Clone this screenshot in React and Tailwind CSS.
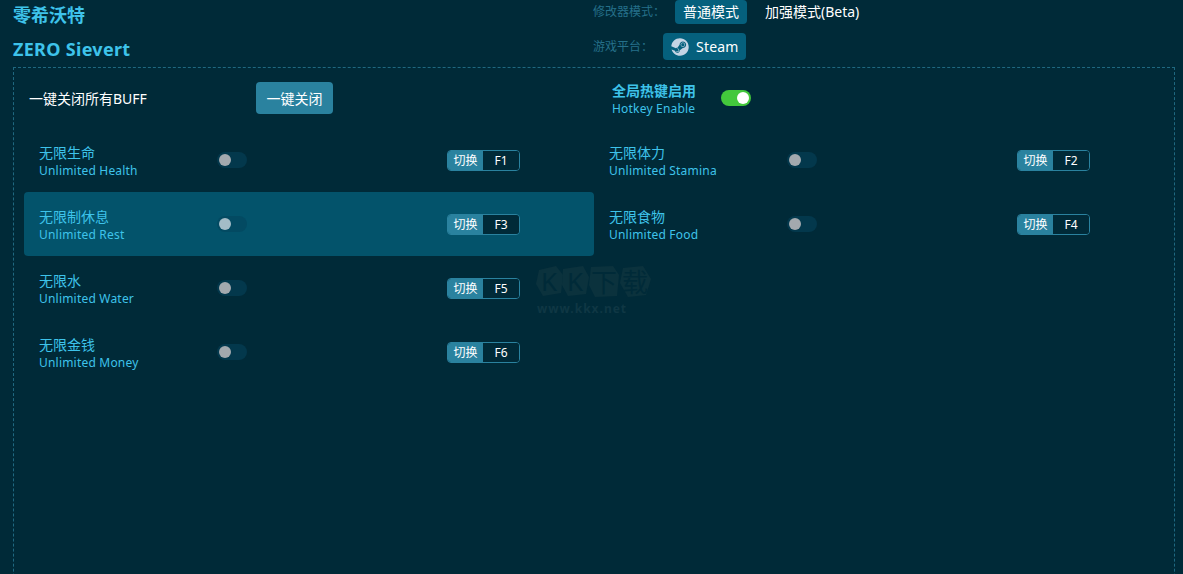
import { FaSteam } from "react-icons/fa";

const font = { fontFamily: '"Noto Sans", "Noto Sans CJK SC", sans-serif' };

const rows = [
  [
    { zh: "无限生命", en: "Unlimited Health", key: "F1" },
    { zh: "无限体力", en: "Unlimited Stamina", key: "F2" },
  ],
  [
    { zh: "无限制休息", en: "Unlimited Rest", key: "F3", active: true },
    { zh: "无限食物", en: "Unlimited Food", key: "F4" },
  ],
  [{ zh: "无限水", en: "Unlimited Water", key: "F5" }],
  [{ zh: "无限金钱", en: "Unlimited Money", key: "F6" }],
];

const Toggle = ({ on, active }) => {
  let track = "bg-[#03384c]";
  let knob = "bg-[#a3a9ae]";
  if (on) {
    track = "justify-end bg-[#43c83c]";
    knob = "bg-white";
  } else if (active) {
    track = "bg-[#034a62]";
    knob = "bg-[#a3bcc7]";
  }
  return (
    <div className={`flex h-4 w-[30px] items-center rounded-full px-[2px] ${track}`}>
      <div className={`h-3 w-3 rounded-full ${knob}`} />
    </div>
  );
};

const HotkeyBadge = ({ name }) => (
  <div className="flex h-[21px] w-[73px] overflow-hidden rounded-[4px] border border-[#2a829f] text-[12px] leading-[19px] text-white">
    <div className="w-[35px] bg-[#2a829f] text-center">切换</div>
    <div className="flex-1 bg-[#002a38] text-center">{name}</div>
  </div>
);

const CheatRow = ({ zh, en, name, active }) => (
  <div
    className={`flex h-16 w-[570px] items-center rounded-[4px] pl-[15px] ${
      active ? "bg-[#03536b]" : ""
    }`}
  >
    <div className="w-[178px] pt-[3px] text-[#3ec3ea]">
      <div className="text-[14px] leading-[18px]">{zh}</div>
      <div className="text-[12px] leading-[17px] tracking-[0.2px]">{en}</div>
    </div>
    <div className="w-[230px]">
      <Toggle active={active} />
    </div>
    <HotkeyBadge name={name} />
  </div>
);

const Watermark = () => (
  <div className="pointer-events-none absolute left-[535px] top-[263px] w-[118px]">
    <svg width="118" height="36" viewBox="0 0 118 36" className="block">
      <g fill="#0b323d">
        <polygon points="4,7 21,3 28,12 26,30 8,33 1,21" />
        <polygon points="28,6 48,3 54,14 51,31 33,33 27,22" />
        <polygon points="56,4 78,3 84,12 82,33 60,34 54,22" />
        <polygon points="88,5 108,3 116,16 111,32 93,34 85,20" />
      </g>
      <g fill="#002a38" fontSize="26" textAnchor="middle" style={font}>
        <text x="14" y="28">K</text>
        <text x="40" y="28">K</text>
        <text x="69" y="29">下</text>
        <text x="100" y="29">载</text>
      </g>
    </svg>
    <div className="mt-[3px] pl-[2px] text-[12px] font-bold leading-[14px] tracking-[1px] text-[#0f3744]">
      www.kkx.net
    </div>
  </div>
);

export default function App() {
  return (
    <div className="relative h-screen w-full overflow-hidden bg-[#002a38] text-white" style={font}>
      <header className="flex h-[67px]">
        <div className="w-[593px] pl-[13px]">
          <div className="text-[18px] font-bold leading-[30px] text-[#3ec3ea]">零希沃特</div>
          <div className="mt-[4px] text-[18px] font-bold leading-[30px] tracking-[0.3px] text-[#3ec3ea]">ZERO Sievert</div>
        </div>
        <div>
          <div className="flex h-6 items-center text-[14px]">
            <span className="w-[82px] text-[12px] text-[#25708a]">修改器模式：</span>
            <span className="rounded-[4px] bg-[#05607d] px-2 leading-6">普通模式</span>
            <span className="ml-[18px] pb-[2px]">加强模式(Beta)</span>
          </div>
          <div className="mt-[9px] flex h-[27px] items-center">
            <span className="w-[70px] text-[12px] text-[#25708a]">游戏平台：</span>
            <span className="flex h-[27px] items-center gap-[7px] rounded-[4px] bg-[#05607d] pl-2 pr-[7px] text-[14px] tracking-[0.2px]">
              <FaSteam className="text-[18px] text-[#c4d4e4]" />
              Steam
            </span>
          </div>
        </div>
      </header>

      <section className="mx-[8px] ml-[13px] h-[600px] border border-dashed border-[#1f6880] px-[10px]">
        <div className="flex h-[60px] items-center">
          <div className="w-[232px] pl-[5px] pt-[2px] text-[14px] leading-5">一键关闭所有BUFF</div>
          <button className="h-8 w-[77px] rounded-[4px] bg-[#2a829f] text-[14px] text-white">一键关闭</button>
          <div className="ml-[279px] pt-[3px] text-[#3ec3ea]">
            <div className="text-[14px] font-bold leading-[18px]">全局热键启用</div>
            <div className="text-[12px] leading-[17px] tracking-[0.2px]">Hotkey Enable</div>
          </div>
          <div className="ml-[25px]">
            <Toggle on />
          </div>
        </div>
        {rows.map((row) => (
          <div key={row[0].key} className="flex">
            {row.map((item) => (
              <CheatRow key={item.key} zh={item.zh} en={item.en} name={item.key} active={item.active} />
            ))}
          </div>
        ))}
      </section>

      <Watermark />
    </div>
  );
}
